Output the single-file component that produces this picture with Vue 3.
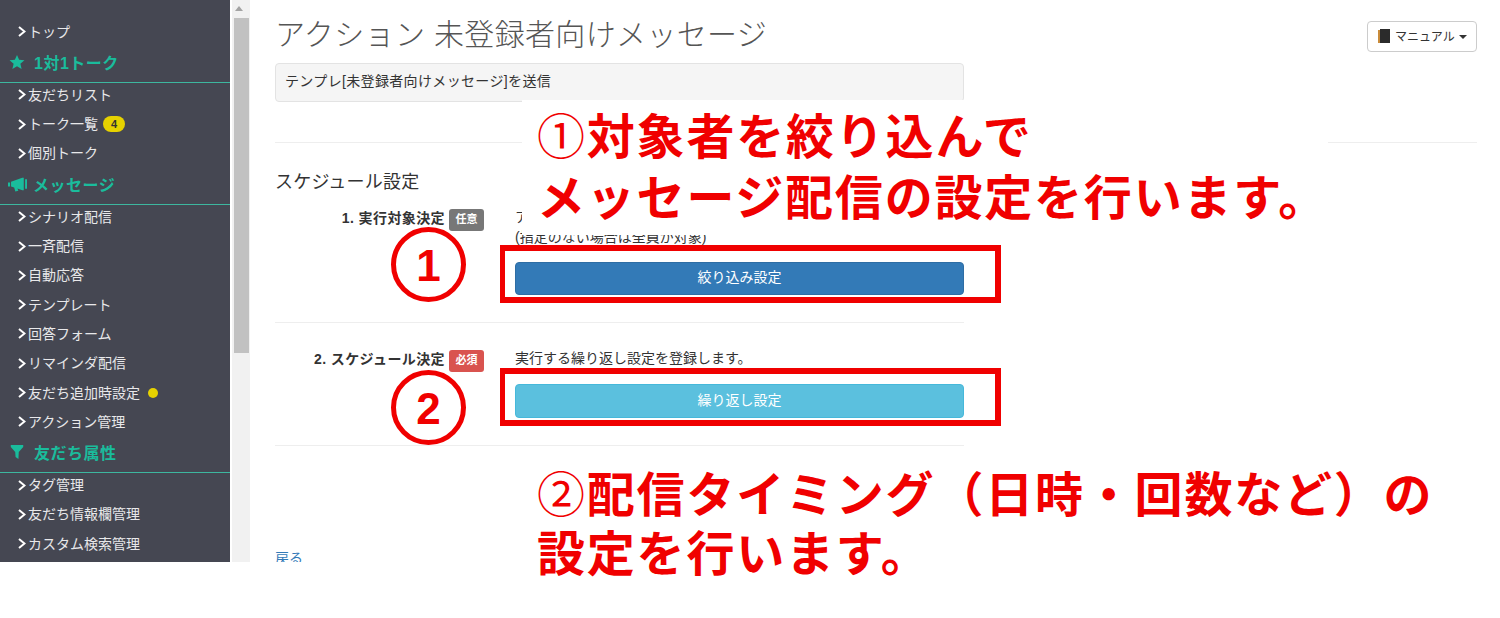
<template>
  <div class="shot">
    <div class="app">
      <nav class="sidebar">
        <template v-for="group in navGroups" :key="group.title">
          <div v-if="group.title" class="nav-head">
            <svg v-if="group.icon === 'star'" class="head-icon" viewBox="0 0 18 18">
              <polygon points="9,1 11.4,6.6 17.4,7.1 12.8,11 14.2,17 9,13.8 3.8,17 5.2,11 0.6,7.1 6.6,6.6" />
            </svg>
            <svg v-else-if="group.icon === 'horn'" class="head-icon horn" viewBox="0 0 20 16">
              <path d="M0 6.5h2.2v4H0zM3.2 5.5 15 1.5h1.6v13H15L10 12.8l.9 2.4-3.2.6-1.2-4.2-3.3-1.1zM18 3h2v10h-2z" />
            </svg>
            <svg v-else class="head-icon" viewBox="0 0 18 18">
              <polygon points="2,1 16,1 16,3.5 11,9 10.6,17 7.4,14.5 7,9 2,3.5" />
            </svg>
            <span>{{ group.title }}</span>
          </div>
          <a v-for="item in group.items" :key="item.label" class="nav-item">
            <svg class="chev" viewBox="0 0 8 11"><polyline points="1,1 6.5,5.5 1,10" /></svg>
            <span>{{ item.label }}</span>
            <span v-if="item.badge" class="count">{{ item.badge }}</span>
            <span v-if="item.dot" class="dot"></span>
          </a>
        </template>
      </nav>

      <div class="scrollbar">
        <span class="arrow"></span>
        <span class="thumb"></span>
      </div>

      <main class="main">
        <div class="title-row">
          <h1>アクション 未登録者向けメッセージ</h1>
          <button class="manual" type="button">
            <svg class="book" viewBox="0 0 12 14">
              <rect x="0" y="1" width="2" height="13" fill="#c98b3a" />
              <rect x="2" y="0" width="10" height="14" fill="#2b2b2b" />
            </svg>
            マニュアル
            <span class="caret"></span>
          </button>
        </div>
        <div class="well">テンプレ[未登録者向けメッセージ]を送信</div>
        <hr class="rule-top" />
        <h2>スケジュール設定</h2>

        <div class="form">
          <div class="step step-one">
            <div class="step-label">
              <b>1. 実行対象決定</b>
              <span class="tag tag-grey">任意</span>
            </div>
            <div class="step-body">
              <p>アクションを実行する対象を登録します。<br />(指定のない場合は全員が対象)</p>
              <button class="wide blue" type="button">絞り込み設定</button>
            </div>
          </div>
          <hr />
          <div class="step step-two">
            <div class="step-label">
              <b>2. スケジュール決定</b>
              <span class="tag tag-red">必須</span>
            </div>
            <div class="step-body">
              <p>実行する繰り返し設定を登録します。</p>
              <button class="wide cyan" type="button">繰り返し設定</button>
            </div>
          </div>
          <hr />
        </div>
        <a class="back">戻る</a>
      </main>
    </div>

    <!-- annotations pasted on top of the screenshot -->
    <div class="patch"></div>
    <div class="note note-one"><span class="mark">①</span>対象者を絞り込んで<br />メッセージ配信の設定を行います。</div>
    <div class="note note-two"><span class="mark">②</span>配信タイミング（日時・回数など）の<br />設定を行います。</div>
    <div class="frame frame-one"></div>
    <div class="frame frame-two"></div>
    <div class="circle circle-one">1</div>
    <div class="circle circle-two">2</div>
  </div>
</template>

<script setup>
const navGroups = [
  { title: '', items: [{ label: 'トップ' }] },
  {
    title: '1対1トーク',
    icon: 'star',
    items: [{ label: '友だちリスト' }, { label: 'トーク一覧', badge: 4 }, { label: '個別トーク' }],
  },
  {
    title: 'メッセージ',
    icon: 'horn',
    items: [
      { label: 'シナリオ配信' },
      { label: '一斉配信' },
      { label: '自動応答' },
      { label: 'テンプレート' },
      { label: '回答フォーム' },
      { label: 'リマインダ配信' },
      { label: '友だち追加時設定', dot: true },
      { label: 'アクション管理' },
    ],
  },
  {
    title: '友だち属性',
    icon: 'filter',
    items: [{ label: 'タグ管理' }, { label: '友だち情報欄管理' }, { label: 'カスタム検索管理' }],
  },
];
</script>

<style>
html,
body {
  margin: 0;
  background: #fff;
}
</style>

<style scoped>
.shot {
  position: relative;
  width: 1500px;
  height: 618px;
  overflow: hidden;
  background: #fff;
  font-family: "Liberation Sans", "Noto Sans CJK JP", sans-serif;
  font-size: 14px;
  color: #333;
}

.app {
  display: flex;
  height: 562px;
  overflow: hidden;
}

.sidebar {
  flex: none;
  width: 230px;
  padding-top: 19.6px;
  background: #454752;
}

.nav-item {
  display: flex;
  align-items: center;
  height: 24px;
  margin-bottom: 5.3px;
  padding-left: 18px;
  color: #e8e8ea;
  line-height: 24px;
}

.chev {
  flex: none;
  width: 8px;
  height: 11px;
  margin-right: 2px;
  fill: none;
  stroke: #fff;
  stroke-width: 2;
}

.count {
  width: 22px;
  height: 16px;
  margin-left: 5px;
  border-radius: 8px;
  background: #e6d200;
  color: #333;
  font-size: 11px;
  font-weight: bold;
  line-height: 16px;
  text-align: center;
}

.dot {
  width: 10px;
  height: 10px;
  margin-left: 8px;
  border-radius: 50%;
  background: #e6d200;
}

.nav-head {
  display: flex;
  align-items: center;
  box-sizing: border-box;
  height: 34px;
  padding-bottom: 7px;
  padding-left: 9px;
  border-bottom: 1px solid #3db79f;
  color: #1abc9c;
  font-size: 16px;
  font-weight: bold;
  letter-spacing: 0.5px;
}

.head-icon {
  flex: none;
  width: 16px;
  height: 16px;
  margin-right: 9px;
  fill: #1abc9c;
}

.head-icon.horn {
  width: 19px;
  margin-left: -1px;
  margin-right: 6px;
}

.scrollbar {
  flex: none;
  position: relative;
  width: 18px;
  margin-left: 1px;
  background: #f1f1f1;
  border-left: 1px solid #fff;
}

.arrow {
  position: absolute;
  top: 6px;
  left: 3px;
  border-left: 4px solid transparent;
  border-right: 4px solid transparent;
  border-bottom: 5px solid #a3a3a3;
}

.thumb {
  position: absolute;
  top: 18px;
  left: 2px;
  width: 15px;
  height: 335px;
  background: #c1c1c1;
}

.main {
  flex: 1;
  padding: 15px 23px 0 25px;
}

.title-row {
  display: flex;
  align-items: flex-start;
  justify-content: space-between;
}

h1 {
  margin: 0;
  color: #555;
  font-size: 30px;
  font-weight: 300;
  letter-spacing: 0.35px;
  line-height: 40px;
}

.manual {
  display: flex;
  align-items: center;
  width: 110px;
  height: 31px;
  margin-top: 6px;
  padding: 0 0 3px 10px;
  border: 1px solid #ccc;
  border-radius: 4px;
  background: #fff;
  color: #333;
  font-family: inherit;
  font-size: 12px;
}

.book {
  width: 12px;
  height: 14px;
  margin-right: 5px;
  margin-top: 2px;
}

.caret {
  margin-left: 4px;
  margin-top: 3px;
  border-top: 4px solid #333;
  border-left: 4px solid transparent;
  border-right: 4px solid transparent;
}

.well {
  box-sizing: border-box;
  width: 689px;
  height: 39px;
  margin-top: 8px;
  padding: 0 9px;
  border: 1px solid #e3e3e3;
  border-radius: 4px;
  background: #f5f5f5;
  letter-spacing: 0.35px;
  line-height: 34px;
}

hr {
  height: 1px;
  margin: 0;
  border: 0;
  background: #eee;
}

.rule-top {
  margin-top: 40px;
}

h2 {
  margin: 26px 0 0;
  font-size: 18px;
  font-weight: 400;
  letter-spacing: 0.2px;
  line-height: 26px;
}

.form {
  width: 689px;
}

.step {
  display: grid;
  grid-template-columns: 209px 1fr;
  column-gap: 31px;
}

.step-one {
  padding: 13px 0 27px;
}

.step-two {
  padding: 26px 0 27px;
}

.step-label {
  display: flex;
  align-items: flex-start;
  justify-content: flex-end;
  letter-spacing: 0.4px;
  line-height: 20px;
}

.tag {
  width: 35px;
  height: 22px;
  margin-left: 4px;
  margin-top: 1px;
  border-radius: 3px;
  color: #fff;
  font-size: 11px;
  font-weight: bold;
  letter-spacing: 0;
  line-height: 21px;
  text-align: center;
}

.tag-grey {
  background: #777;
}

.tag-red {
  background: #d9534f;
}

.step-body p {
  margin: 0;
  font-size: 14px;
  line-height: 19.5px;
}

.wide {
  display: block;
  width: 100%;
  padding: 0 0 5px;
  border: 1px solid transparent;
  border-radius: 4px;
  color: #fff;
  font-family: inherit;
  font-size: 14px;
}

.blue {
  height: 33px;
  margin-top: 15px;
  border-color: #2e6da4;
  background: #337ab7;
}

.cyan {
  height: 34px;
  margin-top: 15.5px;
  border-color: #46b8da;
  background: #5bc0de;
}

.back {
  display: block;
  margin-top: 102px;
  color: #337ab7;
  line-height: 20px;
}

/* annotations */
.patch {
  position: absolute;
  top: 100px;
  left: 522px;
  width: 806px;
  height: 135px;
  background: #fff;
}

.note {
  position: absolute;
  color: #f00000;
  font-family: "Noto Sans CJK JP", sans-serif;
  font-size: 48px;
  font-weight: bold;
  letter-spacing: 1.8px;
  white-space: nowrap;
}

.mark {
  font-weight: 400;
}

.note-one {
  top: 103px;
  left: 537px;
  line-height: 61px;
}

.note-two {
  top: 462px;
  left: 537px;
  line-height: 59px;
}

.frame {
  position: absolute;
  left: 500px;
  box-sizing: border-box;
  width: 501px;
  height: 58px;
  border: 6px solid #f00000;
  border-left-width: 5px;
}

.frame-one {
  top: 245px;
}

.frame-two {
  top: 368px;
}

.circle {
  position: absolute;
  left: 391px;
  box-sizing: border-box;
  width: 75px;
  height: 75px;
  border: 5px solid #f00000;
  border-radius: 50%;
  color: #f00000;
  font-family: "Liberation Sans", sans-serif;
  font-size: 44px;
  font-weight: bold;
  line-height: 67px;
  text-align: center;
}

.circle-one {
  top: 227px;
}

.circle-two {
  top: 370px;
}
</style>
